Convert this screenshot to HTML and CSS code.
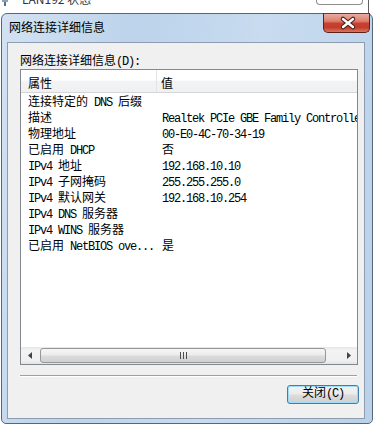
FILE: index.html
```html
<!DOCTYPE html>
<html lang="zh-CN">
<head>
    <meta charset="UTF-8">
    <title>网络连接详细信息</title>
    <link rel="stylesheet" href="styles.css">
</head>
<body>
    <div class="behind">
        <svg class="behind-icon" width="6" height="13" viewBox="0 0 6 13">
            <rect x="2" y="0" width="2" height="6" fill="#5a6f86"/>
            <rect x="0" y="0" width="6" height="2" fill="#8aa2bb"/>
        </svg>
        <span class="behind-title">LAN192 状态</span>
        <span class="behind-btn"></span>
    </div>

    <div class="dialog">
        <div class="titlebar">
            <span class="title">网络连接详细信息</span>
            <span class="close">
                <svg width="45" height="18" viewBox="0 0 45 18">
                    <path d="M19 5 L29 13 M29 5 L19 13" stroke="#4a1d16" stroke-width="4.5" stroke-linecap="round"/>
                    <path d="M19 5 L29 13 M29 5 L19 13" stroke="#ffffff" stroke-width="2.4" stroke-linecap="round"/>
                </svg>
            </span>
        </div>

        <div class="client">
            <div class="label">网络连接详细信息<span class="l">(D):</span></div>

            <div class="list">
                <div class="list-head">
                    <span class="head-cell">属性</span>
                    <span class="head-cell">值</span>
                </div>
                <div class="list-body">
                    <div class="row"><span class="p">连接特定的<span class="l"> DNS </span>后缀</span><span class="v"></span></div>
                    <div class="row"><span class="p">描述</span><span class="v">Realtek PCIe GBE Family Controller</span></div>
                    <div class="row"><span class="p">物理地址</span><span class="v">00-E0-4C-70-34-19</span></div>
                    <div class="row"><span class="p">已启用<span class="l"> DHCP</span></span><span class="v">否</span></div>
                    <div class="row"><span class="p"><span class="l">IPv4 </span>地址</span><span class="v">192.168.10.10</span></div>
                    <div class="row"><span class="p"><span class="l">IPv4 </span>子网掩码</span><span class="v">255.255.255.0</span></div>
                    <div class="row"><span class="p"><span class="l">IPv4 </span>默认网关</span><span class="v">192.168.10.254</span></div>
                    <div class="row"><span class="p"><span class="l">IPv4 DNS </span>服务器</span><span class="v"></span></div>
                    <div class="row"><span class="p"><span class="l">IPv4 WINS </span>服务器</span><span class="v"></span></div>
                    <div class="row"><span class="p">已启用<span class="l"> NetBIOS ove...</span></span><span class="v">是</span></div>
                </div>
                <div class="hscroll">
                    <span class="arrow">
                        <svg width="4" height="7" viewBox="0 0 4 7"><path d="M4 0 L0 3.5 L4 7 Z" fill="#444"/></svg>
                    </span>
                    <span class="track">
                        <span class="thumb">
                            <svg width="7" height="7" viewBox="0 0 7 7">
                                <rect x="0" y="0" width="1" height="7" fill="#4d4d4d"/>
                                <rect x="3" y="0" width="1" height="7" fill="#4d4d4d"/>
                                <rect x="6" y="0" width="1" height="7" fill="#4d4d4d"/>
                            </svg>
                        </span>
                    </span>
                    <span class="arrow">
                        <svg width="4" height="7" viewBox="0 0 4 7"><path d="M0 0 L4 3.5 L0 7 Z" fill="#444"/></svg>
                    </span>
                </div>
            </div>

            <div class="sep"></div>

            <div class="actions">
                <button class="btn">关闭<span class="l">(C)</span></button>
            </div>
        </div>
    </div>
</body>
</html>
```

FILE: styles.css
```css
body {
    margin: 0;
    width: 376px;
    height: 425px;
    overflow: hidden;
    background: #fff;
    font-family: "Liberation Mono", "Noto Sans CJK SC", monospace;
    font-size: 12px;
    color: #000;
}
.l {
    letter-spacing: -1.2px;
}
.behind {
    width: 368px;
    height: 13px;
    overflow: hidden;
    display: flex;
    align-items: flex-start;
    border-right: 1px solid #5f5f5f;
}
.behind-icon {
    margin-left: 2px;
}
.behind-title {
    margin-left: 14px;
    margin-top: -9px;
    line-height: 16px;
    color: #333;
}
.behind-title {
    font-family: "Noto Sans CJK SC", sans-serif;
}
.behind-btn {
    margin-left: auto;
    margin-right: 5px;
    width: 45px;
    height: 4px;
    border: 1px solid #8e8e8e;
    border-top: none;
    border-radius: 0 0 4px 4px;
}
.dialog {
    margin-left: 1px;
    width: 370px;
    height: 409px;
    border: 1px solid #56677a;
    border-radius: 6px 6px 5px 5px;
    background: linear-gradient(100deg, #d3e2f2 0%, #bcd3eb 30%, #c8dbef 60%, #bad1ea 100%);
    display: flex;
    flex-direction: column;
}
.titlebar {
    height: 28px;
    display: flex;
    align-items: flex-start;
}
.title {
    margin: 5px 0 0 7px;
    line-height: 16px;
    font-family: "Noto Sans CJK SC", sans-serif;
    color: #000;
}
.close {
    margin-left: auto;
    margin-right: 2px;
    margin-top: -1px;
    width: 45px;
    height: 18px;
    border: 1px solid #5b2119;
    border-top-color: #7a3328;
    border-radius: 0 0 5px 5px;
    background: linear-gradient(#e9ada0 0%, #dc7e6c 40%, #c8412f 52%, #c43d2c 75%, #d9765f 100%);
    display: flex;
}
.client {
    margin: 0 7px 4px 5px;
    flex: 1;
    border: 1px solid #8d9cae;
    background: #f0f0f0;
    padding: 0 6px 0 12px;
    display: flex;
    flex-direction: column;
}
.label {
    margin-top: 12px;
    line-height: 14px;
    height: 14px;
}
.list {
    height: 294px;
    border: 1px solid #828790;
    background: #fff;
    display: flex;
    flex-direction: column;
}
.list-head {
    height: 22px;
    border-bottom: 1px solid #d5d5d5;
    background: linear-gradient(#ffffff 0%, #ffffff 45%, #f2f3f5 52%, #eef0f2 100%);
    display: grid;
    grid-template-columns: 136px 1fr;
}
.head-cell {
    padding: 3px 0 0 7px;
    line-height: 19px;
    font-family: "Noto Sans CJK SC", sans-serif;
}
.head-cell:first-child {
    border-right: 1px solid #e3e4e6;
}
.head-cell + .head-cell {
    padding-left: 4px;
}
.list-body {
    flex: 1;
    padding-top: 2px;
    overflow: hidden;
}
.row {
    display: grid;
    grid-template-columns: 136px 1fr;
    height: 16px;
    line-height: 16px;
}
.p {
    padding-left: 7px;
    white-space: nowrap;
    overflow: hidden;
}
.v {
    padding-left: 5px;
    letter-spacing: -1.2px;
    white-space: nowrap;
    overflow: hidden;
}
.hscroll {
    height: 17px;
    display: flex;
    background: linear-gradient(#e6e6e6 0%, #f3f3f3 20%, #f0f0f0 80%, #e3e3e3 100%);
}
.arrow {
    width: 17px;
    display: flex;
    align-items: center;
    justify-content: center;
}
.track {
    flex: 1;
    display: flex;
    align-items: center;
    padding-left: 2px;
}
.thumb {
    width: 284px;
    height: 13px;
    border: 1px solid #979797;
    border-radius: 3px;
    background: linear-gradient(#f6f6f6 0%, #ececec 45%, #dbdbdb 55%, #d0d0d0 100%);
    display: flex;
    align-items: center;
    justify-content: center;
}
.sep {
    margin-top: 10px;
    margin-right: 1px;
    height: 1px;
    background: #a0a0a0;
    border-bottom: 1px solid #fff;
}
.actions {
    display: flex;
    justify-content: flex-end;
    margin-top: 8px;
    margin-right: -1px;
}
.btn {
    width: 72px;
    height: 19px;
    padding: 0;
    border: 1px solid #3c7fb1;
    border-radius: 3px;
    background: linear-gradient(#f3f3f3 0%, #ebebeb 48%, #dddddd 52%, #cfcfcf 100%);
    box-shadow: inset 0 0 0 1px #9fdcf7;
    font-family: "Liberation Mono", "Noto Sans CJK SC", monospace;
    font-size: 12px;
    line-height: 17px;
    color: #000;
}
```
